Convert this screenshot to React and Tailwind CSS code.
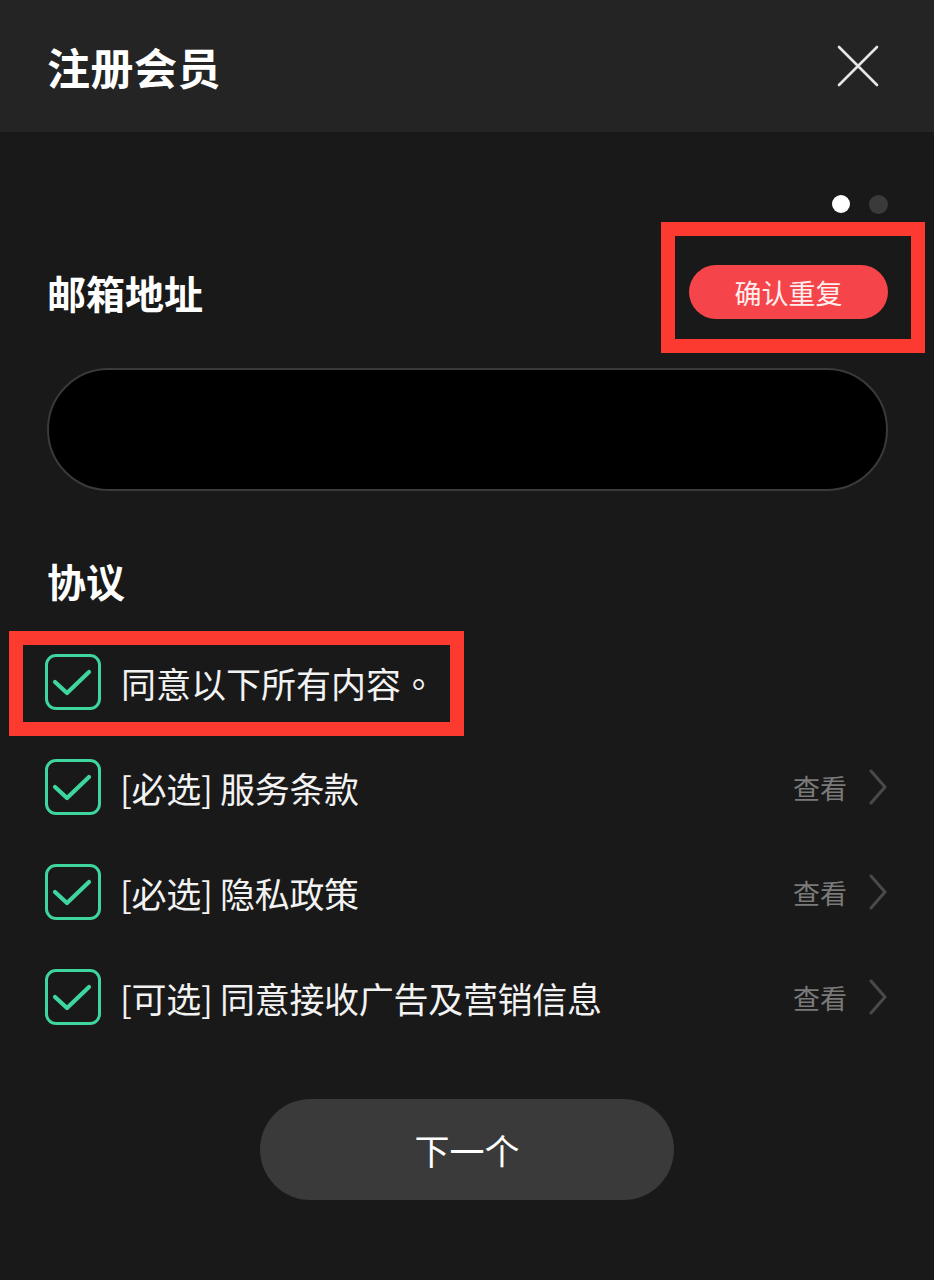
import React from "react";

const font = { fontFamily: '"Noto Sans CJK SC", "Noto Sans", sans-serif' };
const fontTC = { fontFamily: '"Noto Sans CJK TC", "Noto Sans CJK SC", sans-serif' };

function Check() {
  return (
    <div className="w-[56px] h-[56px] shrink-0 rounded-[11px] border-[3px] border-[#3ed69e] flex items-center justify-center">
      <svg width="56" height="56" viewBox="0 0 56 56" className="-m-[3px]">
        <path d="M10 28 L22 39 L44 18" fill="none" stroke="#3ed69e" strokeWidth="4.2" strokeLinecap="round" strokeLinejoin="round" />
      </svg>
    </div>
  );
}

function Row({ text }) {
  return (
    <div className="flex items-center h-[56px]">
      <Check />
      <div className="ml-[19px] text-[35px] leading-none text-[#f2f2f2] tracking-[-0.3px]">{text}</div>
      <div className="ml-auto flex items-center">
        <span className="text-[27px] leading-none text-[#7a7a7a]">查看</span>
        <svg width="20" height="36" viewBox="0 0 20 36" className="ml-[21px]">
          <path d="M3 2 L17 18 L3 34" fill="none" stroke="#4a4a4a" strokeWidth="3" strokeLinecap="round" strokeLinejoin="round" />
        </svg>
      </div>
    </div>
  );
}

export default function App() {
  return (
    <div className="w-[934px] h-[1280px] bg-[#191919] overflow-hidden" style={font}>
      <div className="h-[132px] bg-[#242424] flex items-center justify-between pl-[47px] pr-[55px]">
        <div className="text-[43px] font-bold leading-none text-white tracking-[0.5px]">注册会员</div>
        <svg width="42" height="42" viewBox="0 0 42 42">
          <path d="M2 2 L40 40 M40 2 L2 40" stroke="#e6e6e6" strokeWidth="2.6" strokeLinecap="round" />
        </svg>
      </div>

      <div className="flex justify-end pr-[46px] pt-[63px] gap-[19px]">
        <div className="w-[18px] h-[18px] rounded-full bg-white" />
        <div className="w-[19px] h-[19px] rounded-full bg-[#3a3a3a]" />
      </div>

      <div className="flex items-center justify-between pl-[47px] pr-[46px] mt-[51px]">
        <div className="text-[39px] font-bold leading-none text-white">邮箱地址</div>
        <div className="relative">
          <div className="w-[199px] h-[54px] rounded-full bg-[#f5454a] flex items-center justify-center text-[27px] leading-none text-[#ffeeee]">
            确认重复
          </div>
          <div className="absolute left-[-28px] right-[-37px] top-[-43px] bottom-[-34px] border-[14px] border-[#fc3a2f] pointer-events-none" />
        </div>
      </div>

      <div className="mx-[47px] mt-[49px] w-[841px] h-[123px] rounded-full bg-black border-2 border-[#3a3a3a]" />

      <div className="pl-[47px] mt-[70px] text-[39px] font-bold leading-none text-white">协议</div>

      <div className="pl-[45px] pr-[46px] mt-[54px] flex flex-col gap-[49px]">
        <div className="relative flex items-center h-[56px]">
          <Check />
          <div className="ml-[20px] text-[35px] leading-none text-[#f2f2f2]">
            同意以下所有内容<span style={fontTC}>。</span>
          </div>
          <div className="absolute left-[-36px] w-[455px] top-[-23px] bottom-[-26px] border-[14px] border-[#fc3a2f] pointer-events-none" />
        </div>
        <Row text="[必选] 服务条款" />
        <Row text="[必选] 隐私政策" />
        <Row text="[可选] 同意接收广告及营销信息" />
      </div>

      <div className="flex justify-center mt-[74px]">
        <div className="w-[414px] h-[101px] rounded-full bg-[#3a3a3a] flex items-center justify-center text-[35px] leading-none text-white">
          下一个
        </div>
      </div>
    </div>
  );
}
